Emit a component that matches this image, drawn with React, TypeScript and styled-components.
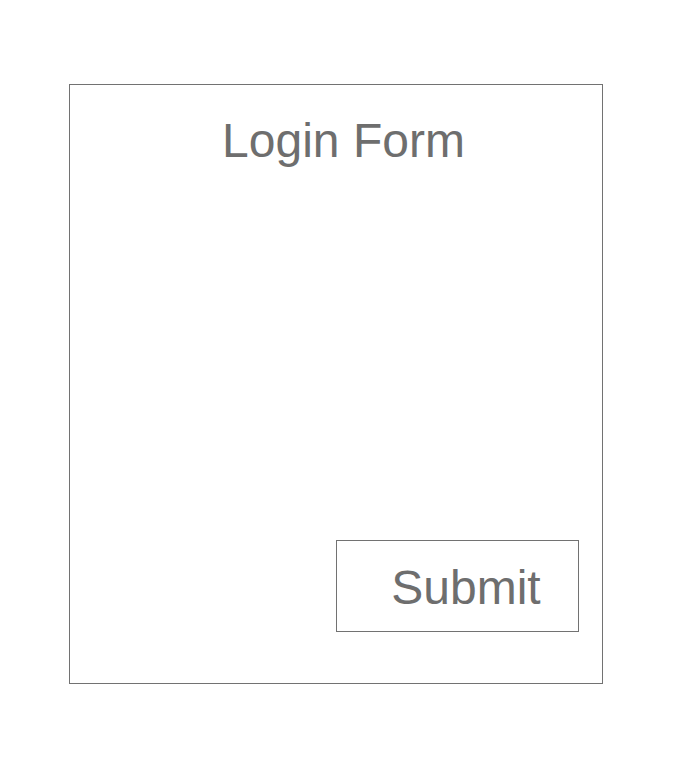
import React from "react";
import styled, { createGlobalStyle } from "styled-components";

const Global = createGlobalStyle`
  html, body { margin: 0; padding: 0; background: #ffffff; }
  body { font-family: "Liberation Sans", Arial, sans-serif; }
`;

const Page = styled.div`
  padding: 84px 0 0 69px;
`;

const Form = styled.form`
  box-sizing: border-box;
  width: 534px;
  height: 600px;
  border: 1px solid #727272;
  display: flex;
  flex-direction: column;
`;

const Title = styled.h1`
  margin: 0;
  padding: 28px 0 0 15px;
  font-family: "Liberation Sans", Arial, sans-serif;
  font-weight: 400;
  font-size: 48px;
  line-height: 55px;
  color: #6e6e6e;
  text-align: center;
`;

const Spacer = styled.div`
  flex: 1;
`;

const Actions = styled.div`
  display: flex;
  justify-content: flex-end;
  padding: 0 23px 51px 0;
`;

const SubmitButton = styled.button`
  box-sizing: border-box;
  width: 243px;
  height: 92px;
  border: 1px solid #727272;
  background: #ffffff;
  padding: 2px 0 0 17px;
  font-family: "Liberation Sans", Arial, sans-serif;
  font-size: 48px;
  line-height: 55px;
  color: #6e6e6e;
  text-align: center;
  cursor: pointer;
`;

export default function App() {
  return (
    <>
      <Global />
      <Page>
        <Form onSubmit={(e) => e.preventDefault()}>
          <Title>Login Form</Title>
          <Spacer />
          <Actions>
            <SubmitButton type="submit">Submit</SubmitButton>
          </Actions>
        </Form>
      </Page>
    </>
  );
}
